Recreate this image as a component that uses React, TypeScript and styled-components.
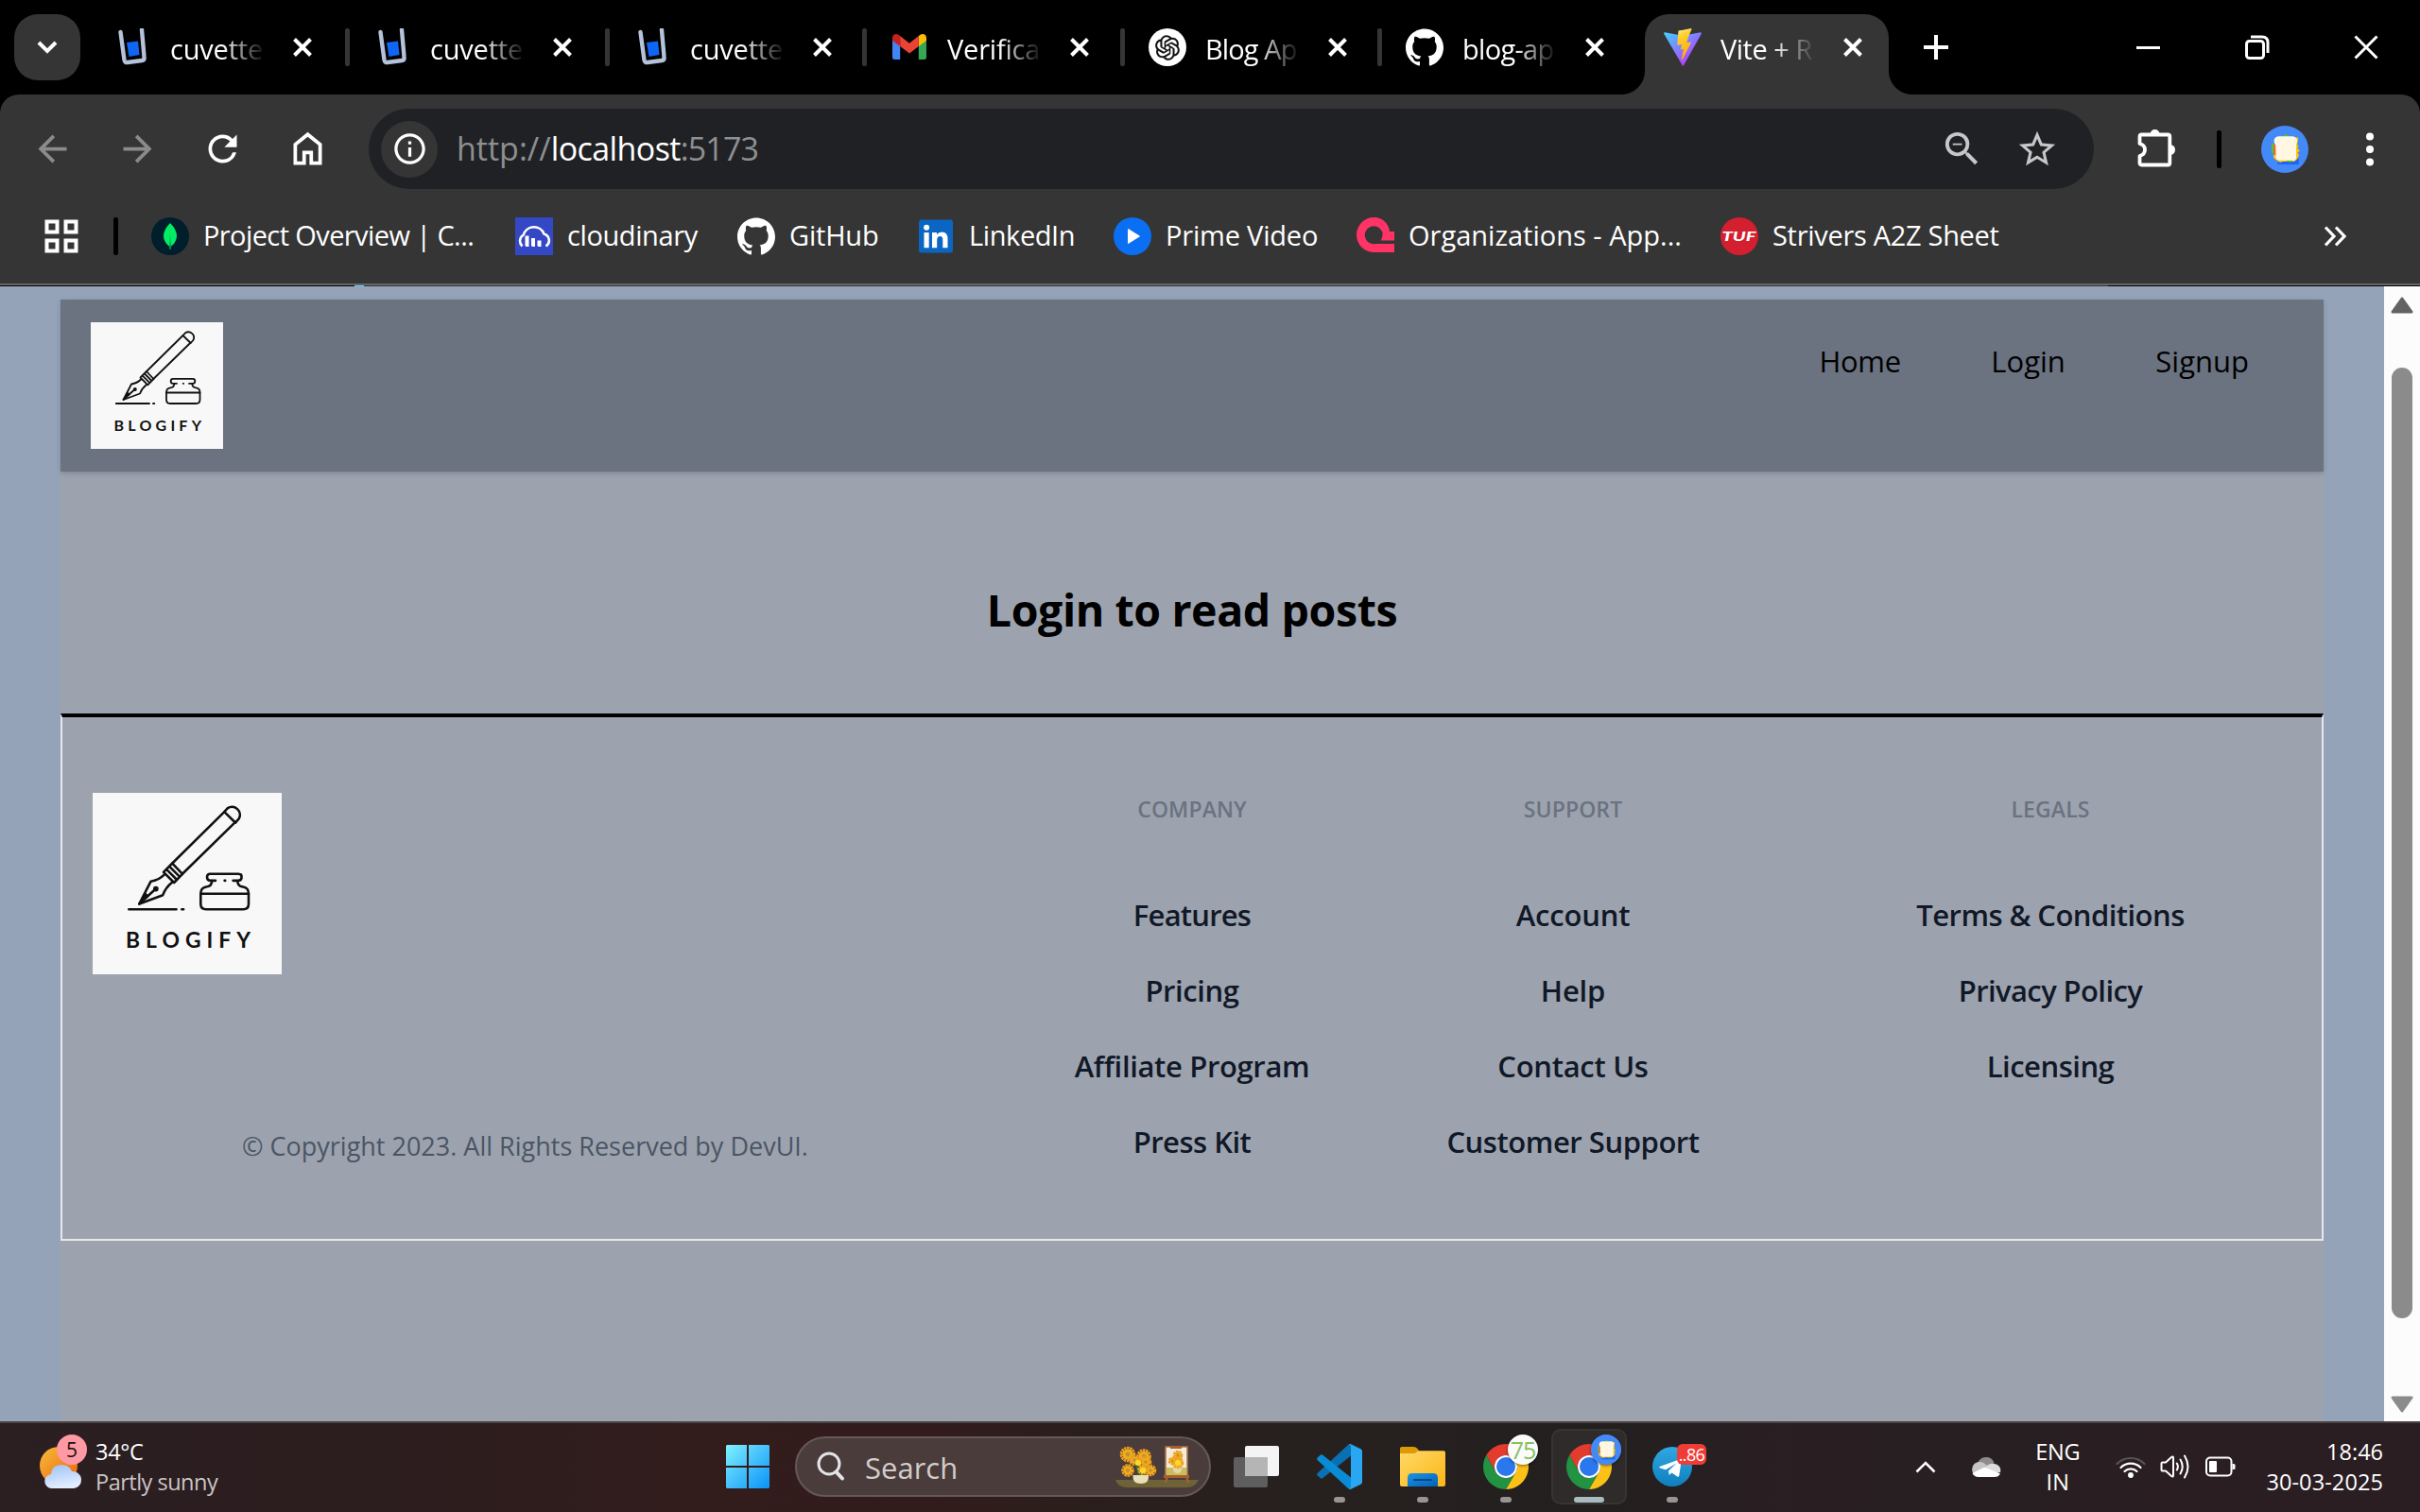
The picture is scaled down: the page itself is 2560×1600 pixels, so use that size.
import React from 'react';
import styled, { createGlobalStyle, css } from 'styled-components';
import { MdArrowBack, MdArrowForward, MdInfoOutline, MdRefresh, MdStarOutline, MdZoomOut } from 'react-icons/md';
import { SiGithub } from 'react-icons/si';
import { AiOutlineOpenAI } from 'react-icons/ai';

const GlobalStyle = createGlobalStyle`
  *, *::before, *::after { box-sizing: border-box; }
  html, body { margin: 0; padding: 0; background: #000; }
  body { font-family: "Open Sans", "Noto Sans", sans-serif; overflow: hidden; }
  svg { display: block; flex: none; }
`;

const Screen = styled.div`
  width: 2560px;
  height: 1600px;
  display: flex;
  flex-direction: column;
  overflow: hidden;
`;

/* ---------- text ---------- */

const Text = styled.span<{ $size: number; $track?: number; $color?: string; $weight?: number; $shift?: number }>`
  display: block;
  flex: none;
  white-space: nowrap;
  font-size: ${(p) => p.$size}px;
  letter-spacing: ${(p) => p.$track ?? 0}px;
  color: ${(p) => p.$color ?? '#fff'};
  font-weight: ${(p) => p.$weight ?? 400};
  line-height: 32px;
  padding-top: ${(p) => Math.max(0, 2 * (p.$shift ?? 0))}px;
  padding-bottom: ${(p) => Math.max(0, -2 * (p.$shift ?? 0))}px;
`;

/* ---------- tab strip ---------- */

const TabStrip = styled.div`
  height: 100px;
  flex: none;
  display: flex;
  align-items: flex-start;
  padding: 15px 0 0 15px;
  background: #000;
`;

const TabSearch = styled.div`
  width: 70px;
  height: 70px;
  margin-right: 15px;
  border-radius: 25px;
  background: #353535;
  display: flex;
  align-items: center;
  justify-content: center;
`;

const Tab = styled.div<{ $step: number; $active?: boolean }>`
  position: relative;
  width: ${(p) => p.$step}px;
  height: 85px;
  padding: 0 0 15px 20px;
  display: flex;
  align-items: center;
  flex: none;
  ${(p) =>
    p.$active &&
    css`
      background: #353535;
      border-radius: 25px 25px 0 0;
      &::before,
      &::after {
        content: '';
        position: absolute;
        bottom: 0;
        width: 25px;
        height: 25px;
      }
      &::before {
        left: -25px;
        background: radial-gradient(circle at 0 0, transparent 24.5px, #353535 25.5px);
      }
      &::after {
        right: -25px;
        background: radial-gradient(circle at 100% 0, transparent 24.5px, #353535 25.5px);
      }
    `}
`;

const TabTitle = styled.div`
  width: 98px;
  height: 44px;
  margin: 3px 32px 0 20px;
  display: flex;
  align-items: center;
  overflow: hidden;
  mask-image: linear-gradient(90deg, #000 56%, rgba(0, 0, 0, 0.1) 98%);
`;

const TabDivider = styled.div<{ $hidden?: boolean }>`
  width: 5px;
  height: 40px;
  margin-left: auto;
  margin-right: 5px;
  border-radius: 2px;
  background: #353535;
  display: ${(p) => (p.$hidden ? 'none' : 'block')};
`;

const NewTab = styled.div`
  width: 100px;
  height: 70px;
  display: flex;
  align-items: center;
  justify-content: center;
`;

const WindowControls = styled.div`
  margin-left: auto;
  height: 70px;
  display: flex;
  align-items: center;
`;

const WindowButton = styled.div`
  width: 115px;
  display: flex;
  justify-content: center;
`;

/* ---------- toolbar and bookmarks ---------- */

const ChromePanel = styled.div`
  height: 200px;
  flex: none;
  display: flex;
  flex-direction: column;
  background: #353535;
  border-radius: 20px 20px 0 0;
`;

const ToolRow = styled.div`
  height: 100px;
  display: flex;
  align-items: center;
  padding: 15px 0 0 10px;
`;

const ToolButton = styled.div<{ $w: number; $color?: string }>`
  width: ${(p) => p.$w}px;
  flex: none;
  display: flex;
  justify-content: center;
  color: ${(p) => p.$color ?? '#fff'};
`;

const Omnibox = styled.div`
  width: 1825px;
  height: 85px;
  flex: none;
  margin-left: 20px;
  padding: 0 20px 0 13px;
  display: flex;
  align-items: center;
  border-radius: 43px;
  background: #202124;
`;

const InfoBadge = styled.div`
  width: 60px;
  height: 60px;
  margin-right: 20px;
  border-radius: 50%;
  background: #353535;
  color: #fff;
  display: flex;
  align-items: center;
  justify-content: center;
`;

const Address = styled.div`
  display: flex;
  flex: 1;
`;

const Rule = styled.div<{ $left: number; $right: number }>`
  width: 5px;
  height: 40px;
  flex: none;
  margin: 0 ${(p) => p.$right}px 0 ${(p) => p.$left}px;
  border-radius: 2px;
  background: #000;
`;

const BookmarkRow = styled.div`
  height: 100px;
  display: flex;
  align-items: center;
  padding-left: 47px;
`;

const Bookmark = styled.div<{ $w: number }>`
  width: ${(p) => p.$w}px;
  flex: none;
  display: flex;
  align-items: center;
  gap: 15px;
`;

const ChromeEdge = styled.div`
  height: 3px;
  flex: none;
  border-top: 2px solid #67646a;
  background: linear-gradient(90deg, #000 375px, #61dafb 375px, #61dafb 385px, #35363a 385px, #35363a 2230px, #000 2230px);
`;

/* ---------- page ---------- */

const Viewport = styled.div`
  height: 1201px;
  flex: none;
  display: flex;
  background: #94a3b8;
`;

const Page = styled.div`
  width: 2394px;
  margin: 14px 64px 0;
  display: flex;
  flex-direction: column;
  background: #9ca3af;
`;

const Header = styled.header`
  height: 182px;
  flex: none;
  padding: 24px 79px 24px 32px;
  display: flex;
  justify-content: space-between;
  background: #6b7280;
  box-shadow: 0 2px 6px rgba(0, 0, 0, 0.13), 0 2px 4px -2px rgba(0, 0, 0, 0.13);
`;

const Nav = styled.nav`
  display: flex;
  align-items: flex-start;
  gap: 95.5px;
  padding-top: 25px;
`;

const Hero = styled.section`
  height: 256px;
  flex: none;
  display: flex;
  align-items: center;
  justify-content: center;
  padding-top: 35px;
`;

const Title = styled.h1`
  margin: 0;
  font-size: 46.5px;
  line-height: 64px;
  letter-spacing: -0.4px;
  font-weight: 700;
  color: #000;
`;

const Footer = styled.footer`
  height: 558px;
  flex: none;
  display: flex;
  border: 2px solid #e5e7eb;
  border-top: 4px solid #000;
`;

const Brand = styled.div`
  width: 978px;
  flex: none;
  padding: 80px 0 82px 32px;
  display: flex;
  flex-direction: column;
  justify-content: space-between;
`;

const Copyright = styled.div`
  display: flex;
  justify-content: center;
  padding-right: 31px;
`;

const LinkColumn = styled.div<{ $w: number; $inset?: number }>`
  width: ${(p) => p.$w}px;
  flex: none;
  padding: 81px 0 0 ${(p) => p.$inset ?? 0}px;
  display: flex;
  flex-direction: column;
  align-items: center;
`;

const LinkList = styled.div`
  margin-top: 80px;
  display: flex;
  flex-direction: column;
  align-items: center;
  gap: 48px;
`;

const Scrollbar = styled.div`
  width: 38px;
  display: flex;
  flex-direction: column;
  align-items: center;
  padding: 11px 0 9px;
  background: #fcfcfc;
`;

const Thumb = styled.div`
  width: 22px;
  height: 1006px;
  margin: 57px 0 auto;
  border-radius: 11px;
  background: #8b8b8b;
`;

/* ---------- taskbar ---------- */

const Taskbar = styled.div`
  height: 96px;
  flex: none;
  display: flex;
  align-items: center;
  border-top: 2px solid #4a4243;
  padding: 0 39px 2px 41px;
  background: linear-gradient(90deg, #2b1f22 0, #2c1d1e 400px, #331d1c 780px, #321c1b 980px, #2b1e1b 1120px, #26211f 1400px, #231f1f 1700px, #2a1f23 1880px, #271f21 2080px, #2a1e23 2300px, #2b1e23 100%);
`;

const Weather = styled.div`
  width: 727px;
  display: flex;
  align-items: center;
  gap: 7px;
`;

const Stack = styled.div<{ $align: string }>`
  display: flex;
  flex-direction: column;
  flex: none;
  align-items: ${(p) => p.$align};
`;

const SearchPill = styled.div`
  width: 440px;
  height: 64px;
  margin: 0 24px 0 27px;
  padding: 0 9px 0 21px;
  display: flex;
  align-items: center;
  flex: none;
  border: 2px solid #655856;
  border-radius: 32px;
  background: #4a3c3a;
`;

const SearchText = styled.div`
  margin-left: 21px;
  flex: 1;
`;

const Apps = styled.div`
  display: flex;
  flex: none;
  gap: 8px;
  margin-left: 24px;
`;

const AppSlot = styled.div<{ $active?: boolean }>`
  position: relative;
  width: 80px;
  height: 80px;
  flex: none;
  display: flex;
  align-items: center;
  justify-content: center;
  border-radius: 10px;
  border: 2px solid ${(p) => (p.$active ? '#383433' : 'transparent')};
  background: ${(p) => (p.$active ? '#2f2b2a' : 'transparent')};
`;

const Running = styled.div<{ $active?: boolean }>`
  position: absolute;
  bottom: 0;
  left: 50%;
  width: ${(p) => (p.$active ? 32 : 12)}px;
  height: 6px;
  border-radius: 3px;
  background: ${(p) => (p.$active ? '#a9bbc0' : '#989494')};
  transform: translateX(-50%);
`;

const Badge = styled.div<{ $bg: string }>`
  position: absolute;
  right: 4px;
  top: 4px;
  width: 32px;
  height: 32px;
  border-radius: 50%;
  display: flex;
  align-items: center;
  justify-content: center;
  overflow: hidden;
  background: ${(p) => p.$bg};
  box-shadow: 0 1px 3px rgba(0, 0, 0, 0.5);
`;

const CountBadge = styled.div`
  position: absolute;
  right: 2px;
  top: 14px;
  width: 31px;
  height: 22px;
  border-radius: 6px;
  display: flex;
  align-items: center;
  justify-content: center;
  background: #f03c37;
`;

const Tray = styled.div`
  margin-left: auto;
  display: flex;
  align-items: center;
`;

const TrayItem = styled.div<{ $after: number }>`
  margin-right: ${(p) => p.$after}px;
`;

/* ---------- drawings ---------- */

const BlogifyLogo = ({ w, h }: { w: number; h: number }) => (
  <svg width={w} height={h} viewBox="0 0 140 134" preserveAspectRatio="none">
    <rect width="140" height="134" fill="#f8f8f8" />
    <g fill="none" stroke="#111" strokeWidth="1.8" strokeLinecap="round" strokeLinejoin="round">
      <path d="M97.5 14 L59 52 M105.7 21.5 L66.3 60" />
      <path d="M97.5 14 L100 11.300 A5.900 5.900 0 0 1 108.400 19 L105.7 22 Z" />
      <path d="M59 52 L52.5 58.5 L60.3 66.3 L66.5 60 Z M57 54.5 L64.5 62 M54.8 56.6 L62.4 64.2" />
      <path d="M53 60.5 Q49 64.5 43 65.5 L34.5 82 L52 75.5 Q54 70 59 66" />
      <path d="M34.5 82 L46 71.5" />
      <path d="M26.8 86 H62 M66 86 H67.3" />
      <path d="M91 64.8 H87 Q84.7 64.8 84.7 62.2 Q84.7 59.8 87 59.8 H108 Q110.3 59.8 110.3 62.2 Q110.3 64.8 108 64.8 H104 M97.7 64.8 H98.200" />
      <path d="M88.3 65 Q88.3 69 84 69.4 Q80 70 80 74.5 V82 Q80 86 84 86 H111.5 Q115.5 86 115.5 82 V74.5 Q115.5 70 111.5 69.4 Q107.3 69 107.3 65" />
      <path d="M80 74.5 H115.5" />
    </g>
    <circle cx="46.8" cy="70.9" r="2" fill="#111" />
    <path d="M34.5 82 L39 73.5 L42 76.5 Z" fill="#111" />
    <text x="24.5" y="114.7" textLength="92.5" fontFamily="Lato, sans-serif" fontSize="16" fontWeight="700" fill="#111">
      BLOGIFY
    </text>
  </svg>
);

const Cuvette = () => (
  <svg width="40" height="40" viewBox="0 0 40 40">
    <path d="M7.5 4 L11.5 33.5 Q12 36.5 15 36 L30 34 Q33 33.5 32.5 30 L30 1.5" fill="none" stroke="#b4c3da" strokeWidth="4.4" strokeLinecap="round" strokeLinejoin="round" />
    <path d="M14 15 L26 13.5 L27.5 28 L16.5 30 Z" fill="#0f66f5" />
  </svg>
);

const Gmail = () => (
  <svg width="40" height="40" viewBox="0 0 40 40">
    <path d="M2 9 V30.5 Q2 33 4.500 33 H10.200 V17 Z" fill="#4285f4" />
    <path d="M38 9 V30.500 Q38 33 35.500 33 H29.800 V17 Z" fill="#34a853" />
    <path d="M2 11 Q2 6 6 6 Q8 6 10.200 8 V19 L2 13 Z" fill="#c5221f" />
    <path d="M38 11 Q38 6 34 6 Q32 6 29.800 8 V19 L38 13 Z" fill="#fbbc04" />
    <path d="M10.200 8 L20 15.700 L29.800 8 V19 L20 26.500 L10.200 19 Z" fill="#ea4335" />
  </svg>
);

const OpenAiDisc = styled.div`
  width: 40px;
  height: 40px;
  border-radius: 50%;
  background: #fff;
  color: #111;
  display: flex;
  align-items: center;
  justify-content: center;
  flex: none;
`;

const Vite = () => (
  <svg width="40" height="40" viewBox="0 0 40 40">
    <defs>
      <linearGradient id="vite-a" x1="0" y1="0" x2="0.8" y2="0.9">
        <stop offset="0" stopColor="#41d1ff" />
        <stop offset="1" stopColor="#bd34fe" />
      </linearGradient>
      <linearGradient id="vite-b" x1="0.4" y1="0" x2="0.6" y2="1">
        <stop offset="0" stopColor="#ffea83" />
        <stop offset="0.2" stopColor="#ffd02f" />
        <stop offset="1" stopColor="#ffa800" />
      </linearGradient>
    </defs>
    <path d="M39.800 5.800 L21.200 39 Q20.400 40.400 19.600 39 L0.200 5.800 Q-0.300 4.200 1.300 4.300 L20 7.700 L38.700 4.300 Q40.300 4.200 39.800 5.800 Z" fill="url(#vite-a)" />
    <path d="M28.800 0.100 L15.500 2.600 L14.300 17 Q14.300 17.800 15.200 17.700 L19 16.900 L17.900 22.400 L21 21.800 L18.700 32.500 Q19.500 33.700 20.300 32.300 L29.200 14.500 L24.300 15.200 L25.800 9.700 L29.500 1 Q29.700 0 28.800 0.100 Z" fill="url(#vite-b)" />
  </svg>
);

const CloseX = ({ size = 20, stroke = 4 }: { size?: number; stroke?: number }) => (
  <svg width={size} height={size} viewBox={`0 0 ${size} ${size}`}>
    <path d={`M1.5 1.500 L${size - 1.5} ${size - 1.5} M${size - 1.5} 1.500 L1.500 ${size - 1.5}`} stroke="#fff" strokeWidth={stroke} />
  </svg>
);

const HomeIcon = () => (
  <svg width="45" height="45" viewBox="0 0 24 24" fill="currentColor">
    <path d="M6 19h3v-6h6v6h3v-9l-6-4.800L6 10v9Zm-2 2V9l8-6.500L20 9v12h-7v-6h-2v6H4Z" />
  </svg>
);

const Puzzle = () => (
  <svg width="44" height="44" viewBox="0 0 44 44">
    <path
      d="M3.500 8.500 Q3.500 6.500 5.500 6.500 H33.300 Q35.300 6.500 35.300 8.500 V36.500 Q35.300 38.500 33.300 38.500 H5.500 Q3.500 38.500 3.500 36.500 V29 Q9 27.500 9 22.500 Q9 17.500 3.500 16 Z"
      fill="none"
      stroke="#fff"
      strokeWidth="3.800"
      strokeLinejoin="round"
    />
    <path d="M14.500 6 A5.100 5.100 0 0 1 24.700 6 Z M35.500 17 A5.500 5.500 0 0 1 35.500 28 Z" fill="#fff" />
  </svg>
);

const SandwichAvatar = ({ size }: { size: number }) => (
  <svg width={size} height={size} viewBox="0 0 50 50">
    <circle cx="25" cy="25" r="25" fill="#4489f8" />
    <path d="M17.500 34 H39.800 V41 H17.500 Z" fill="#1f62ff" />
    <path d="M34 12.500 H39 V16 L38 19.500 L39.500 21.500 L38.500 24 L41 26.500 L38.500 28.500 L40 31 L38.500 35 L35 38 H23 L20 39 L17 37 L13 34 V31 Z" fill="#ffc400" />
    <path d="M22 12 L26 9 L30 12 Z M10.800 20 L13 18 V30.500 L11 28 Z M26 37 L30 39 L34 37 Z" fill="#55c61e" />
    <path d="M12.800 20 H16 V31 H13.500 Z" fill="#f4623a" />
    <path d="M18 11.300 H33.500 Q39 12.500 37.800 18 L37 21 V34 Q37 37 33.500 36.800 L19 36.800 Q15.500 36.800 15.500 33 L15.300 21 L13.700 17.500 Q13 12 18 11.300 Z" fill="#fff7e2" />
  </svg>
);

const AppsGrid = () => (
  <svg width="36" height="36" viewBox="0 0 36 36" fill="none" stroke="#fff" strokeWidth="4">
    <rect x="2.500" y="2.500" width="11" height="11" />
    <rect x="22.500" y="2.500" width="11" height="11" />
    <rect x="2.500" y="22.500" width="11" height="11" />
    <rect x="22.500" y="22.500" width="11" height="11" />
  </svg>
);

const Mongo = () => (
  <svg width="40" height="40" viewBox="0 0 40 40">
    <circle cx="20" cy="20" r="20" fill="#001e2b" />
    <path d="M20 6 Q27 13 27 20 Q26.500 27 20.600 31 L20.400 34 H19.600 L19.400 31 Q13.500 27 13 20 Q13 13 20 6 Z" fill="#00ed64" />
    <path d="M20 18 L20.700 31 H19.500 Z" fill="#00684a" />
  </svg>
);

const Cloudinary = () => (
  <svg width="40" height="40" viewBox="0 0 40 40">
    <rect width="40" height="40" fill="#3448c5" />
    <path d="M7.500 30.500 A7.500 7.500 0 0 1 8.800 18.500 A11.500 11.500 0 0 1 30.500 17.500 A7.200 7.200 0 0 1 32.500 30.500" fill="none" stroke="#fff" strokeWidth="2.600" />
    <path d="M10.500 19.500 h4 v11.500 h-3 l-1 -1 Z M17 22 h4 v9 h-3 l-1 -1 Z M23.500 24.500 h4 v6.500 h-3 l-1 -1 Z" fill="#fff" />
  </svg>
);

const LinkedIn = () => (
  <svg width="40" height="40" viewBox="0 0 40 40">
    <rect x="2" y="2.500" width="36" height="35" rx="3" fill="#0a66c2" />
    <path d="M7.500 16 h5.200 v16.300 h-5.200 Z M16 16 h5 v2.300 Q22.800 15.600 26.300 15.600 Q32.500 15.600 32.500 22.800 V32.300 H27.300 V23.800 Q27.300 20.100 24.600 20.100 Q21.200 20.100 21.200 24.200 V32.300 H16 Z" fill="#fff" />
    <circle cx="10.100" cy="10.800" r="3" fill="#fff" />
  </svg>
);

const PrimeVideo = () => (
  <svg width="40" height="40" viewBox="0 0 40 40">
    <circle cx="20" cy="20" r="20" fill="#0a6ff2" />
    <path d="M15.500 12.500 L27.500 20 L15.500 27.500 Z" fill="#fff" stroke="#fff" strokeLinejoin="round" />
  </svg>
);

const Organizations = () => (
  <svg width="40" height="40" viewBox="0 0 40 40">
    <path d="M35 15 A16.500 17 0 0 0 18 0 A18 18.500 0 0 0 18 37 H40 V28 H20 A9.500 9.500 0 1 1 27 15 Z" fill="#ff3366" />
    <path d="M27.500 15 H40 V24.500 H25.500 Q28 21 27.500 15 Z" fill="#ff3366" />
  </svg>
);

const Tuf = () => (
  <svg width="40" height="40" viewBox="0 0 40 40">
    <circle cx="20" cy="20" r="20" fill="#d41f30" />
    <text x="1.500" y="25" textLength="36" lengthAdjust="spacingAndGlyphs" fontFamily="Lato, sans-serif" fontSize="14" fontWeight="900" fontStyle="italic" fill="#fff">
      TUF
    </text>
  </svg>
);

const SunCloud = () => (
  <svg width="53" height="68" viewBox="0 0 53 68">
    <defs>
      <linearGradient id="sun" x1="0" y1="0" x2="1" y2="1">
        <stop offset="0" stopColor="#f4bd3a" />
        <stop offset="1" stopColor="#f0600e" />
      </linearGradient>
      <linearGradient id="cloud" x1="0" y1="0" x2="0.300" y2="1">
        <stop offset="0" stopColor="#9cc0f8" />
        <stop offset="1" stopColor="#e2edff" />
      </linearGradient>
    </defs>
    <circle cx="21" cy="33" r="20" fill="url(#sun)" />
    <path d="M13 57 A8 7.600 0 0 1 13 42 Q14 32 24 32 Q32 32 35 39 A9 9 0 0 1 37 57 Z" fill="url(#cloud)" />
    <circle cx="35" cy="16" r="16" fill="#ff99a4" />
    <text x="35" y="23.500" textAnchor="middle" fontFamily="Open Sans, sans-serif" fontSize="21" fill="#1a1010">
      5
    </text>
  </svg>
);

const StartIcon = () => (
  <svg width="46" height="46" viewBox="0 0 46 46">
    <defs>
      <linearGradient id="start" gradientUnits="userSpaceOnUse" x1="0" y1="0" x2="46" y2="46">
        <stop offset="0" stopColor="#7df3ff" />
        <stop offset="0.500" stopColor="#45c0fb" />
        <stop offset="1" stopColor="#0a93f8" />
      </linearGradient>
    </defs>
    <path d="M1 0 H22 V22 H0 V1 Z M24 0 H45 L46 1 V22 H24 Z M0 24 H22 V46 H1 L0 45 Z M24 24 H46 V45 L45 46 H24 Z" fill="url(#start)" />
  </svg>
);

const SearchIcon = () => (
  <svg width="30" height="32" viewBox="0 0 30 32" fill="none" stroke="#e4e4e8" strokeLinecap="round">
    <circle cx="13" cy="13" r="11" strokeWidth="3" />
    <path d="M20.500 21.500 L27 28.500" strokeWidth="4" />
  </svg>
);

const blossoms: [number, number, number][] = [
  [13, 11, 8], [30, 13, 7.5], [13, 28, 6.5], [20, 17, 5.500], [32, 19, 6], [37, 28, 6], [29, 27, 5.5],
  [66, 12, 5], [66, 20, 6], [60, 18, 4],
];

const Sunflowers = () => (
  <svg width="90" height="48" viewBox="0 0 90 48">
    <path d="M0 38 H88 Q84 46 76 46 H12 Q3 46 0 38 Z" fill="#6e6236" />
    <path d="M21 16 L26 35 M35 20 L28 35" stroke="#2e6b3c" strokeWidth="3" />
    <path d="M54 38 L56 30 H74 L77 41 M56 30 L53 41" stroke="#a5602d" strokeWidth="2.500" fill="none" />
    <rect x="53" y="3" width="23" height="31" fill="#f3ead8" stroke="#a8764a" strokeWidth="1.500" />
    <rect x="54" y="25" width="21" height="8" fill="#c9bd5e" />
    <rect x="51" y="33" width="27" height="3" fill="#a5602d" />
    <rect x="58" y="2" width="12" height="3" fill="#a5602d" />
    <path d="M61 24 H70 Q71 31 65.500 31 Q60 31 61 24 Z" fill="#e3d9a8" />
    {blossoms.map(([x, y, r]) => (
      <g key={`${x}-${y}`}>
        <circle cx={x} cy={y} r={r - 1.2} fill="none" stroke="#eda11d" strokeWidth="3" strokeDasharray="2.400 0.700" />
        <circle cx={x} cy={y} r={r * 0.7} fill="#f2a922" />
        <circle cx={x} cy={y} r={r * 0.3} fill="#b8962a" />
      </g>
    ))}
    <circle cx="24" cy="20" r="3" fill="#ffd92a" />
    <circle cx="29" cy="28" r="3" fill="#ffd92a" />
    <circle cx="66" cy="20" r="3" fill="#ffd92a" />
    <path d="M18.500 33 H35 Q36 42 27 42 Q17.500 42 18.500 33 Z" fill="#e9dfb4" />
  </svg>
);

const TaskView = () => (
  <svg width="48" height="44" viewBox="0 0 48 44">
    <rect x="0" y="12" width="36" height="32" rx="2" fill="#5e5e5e" />
    <rect x="12" y="0" width="36" height="32" rx="2" fill="#f4f4f4" />
    <rect x="12" y="12" width="24" height="20" fill="#b5b5b5" />
  </svg>
);

const VsCode = () => (
  <svg width="48" height="48" viewBox="0 0 48 48">
    <path d="M33 1 L36 0 V12.500 L6 36.300 Q5 37 4 36.300 L0.600 33.300 Q-0.300 32 0.600 31 Z" fill="#0a70b4" />
    <path d="M0.600 17 Q-0.300 15.800 0.600 14.500 L4 11.600 Q5 10.800 6 11.600 L36 35.500 V48 L33 47 Z" fill="#0a8bd6" />
    <path d="M35.500 0 L46.500 5.300 Q48 6 48 7.500 V40.500 Q48 42 46.500 42.700 L35.500 48 Q34.500 48 33 47 Q36 48 36 45 V3 Q36 0 33 1 Q34.500 0 35.500 0 Z" fill="#2aa7f2" />
  </svg>
);

const Folder = () => (
  <svg width="48" height="42" viewBox="0 0 48 42">
    <defs>
      <linearGradient id="folder" x1="0" y1="0" x2="1" y2="1">
        <stop offset="0" stopColor="#ffd968" />
        <stop offset="1" stopColor="#fbb616" />
      </linearGradient>
      <linearGradient id="dock" x1="0" y1="0" x2="1" y2="1">
        <stop offset="0" stopColor="#1a95e0" />
        <stop offset="1" stopColor="#0560b8" />
      </linearGradient>
    </defs>
    <path d="M0 2 Q0 0 2 0 H14 Q17 0 18.500 2 L21 5.500 V12 H0 Z" fill="#dd9a04" />
    <path d="M0 7 H14 Q16 7 17.500 5.500 Q18.800 4.200 21 4.200 H46 Q48 4.200 48 6.200 V40 Q48 42 46 42 H2 Q0 42 0 40 Z" fill="url(#folder)" />
    <path d="M8 42 V33 Q8 28 13 28 H35 Q40 28 40 33 V42 Z" fill="url(#dock)" />
    <path d="M15 35 H33" stroke="#0a4688" strokeWidth="2" strokeLinecap="round" />
  </svg>
);

const ChromeLogo = () => (
  <svg width="48" height="48" viewBox="0 0 48 48">
    <path d="M24 12H44.780A24 24 0 0 0 3.220 12L13.610 30A12 12 0 0 1 24 12Z" fill="#e33b2e" />
    <path d="M34.390 30 24 48A24 24 0 0 0 44.780 12H24A12 12 0 0 1 34.390 30Z" fill="#fbc116" />
    <path d="M13.610 30 3.220 12A24 24 0 0 0 24 48L34.390 30A12 12 0 0 1 13.610 30Z" fill="#229342" />
    <circle cx="24" cy="24" r="12" fill="#fff" />
    <circle cx="24" cy="24" r="10" fill="#2a77ee" />
  </svg>
);

const Telegram = () => (
  <svg width="42" height="42" viewBox="0 0 42 42">
    <defs>
      <linearGradient id="telegram" x1="0" y1="0" x2="0" y2="1">
        <stop offset="0" stopColor="#2fa8e2" />
        <stop offset="1" stopColor="#0f7fbe" />
      </linearGradient>
    </defs>
    <circle cx="21" cy="21" r="21" fill="url(#telegram)" />
    <path d="M7.500 21 L31 12.500 L28.300 30.500 Q28 32.300 26.300 31.500 L20.500 27.500 L17.800 30 L17 25.500 L25.500 17.500 L14 24.300 L8 22.400 Q6.500 21.600 7.500 21 Z" fill="#fff" />
  </svg>
);

const Cloud = () => (
  <svg width="32" height="22" viewBox="0 0 32 22">
    <path d="M7 8 A9.200 9.200 0 0 1 24.500 7 L16 14 Z" fill="#8f8b8d" />
    <path d="M8 6 Q13 5.500 17 10 L4 20 A8 8 0 0 1 8 6 Z" fill="#c6c4c5" />
    <path d="M15 12 Q19 7 25 8 A7 7 0 0 1 31 17 L26 18 Z" fill="#dcdcdc" />
    <path d="M1.500 18 L14.500 11.500 L31 18.500 Q29 22 25 22 H8 Q3.500 22 1.500 18 Z" fill="#fff" />
  </svg>
);

const Wifi = () => (
  <svg width="32" height="27" viewBox="0 0 32 27" fill="none" stroke="#fff" strokeWidth="2.200" strokeLinecap="round">
    <path d="M1.500 10 A20.500 20.500 0 0 1 30.500 10" stroke="#5b5255" />
    <path d="M5.500 14 A15 15 0 0 1 26.500 14" />
    <path d="M9.500 18 A9.300 9.300 0 0 1 22.500 18" />
    <circle cx="16" cy="22" r="2.200" fill="#fff" stroke="#fff" strokeWidth="1.500" />
  </svg>
);

const Speaker = () => (
  <svg width="33" height="28" viewBox="0 0 33 28" fill="none" stroke="#fff" strokeWidth="2" strokeLinecap="round" strokeLinejoin="round">
    <path d="M1.500 10.500 Q1.500 9.500 2.500 9.500 H6 L12 4 Q14 2.500 14 5 V23 Q14 25.500 12 24 L6 18.500 H2.500 Q1.500 18.500 1.500 17.500 Z" />
    <path d="M17.800 10.500 Q20 14 17.800 17.500 M21.500 6.500 Q26 14 21.500 21.500 M26 2.500 Q33 14 26 25.500" />
  </svg>
);

const Battery = () => (
  <svg width="32" height="22" viewBox="0 0 32 22">
    <rect x="1" y="1.500" width="26.500" height="19" rx="4" fill="none" stroke="#fff" strokeWidth="2" />
    <rect x="4" y="5" width="8" height="12" rx="1" fill="#fff" />
    <path d="M28.500 8 H30 Q31.500 8 31.500 9.500 V12.500 Q31.500 14 30 14 H28.500 Z" fill="#fff" />
  </svg>
);

/* ---------- data ---------- */

const tabs = [
  { icon: <Cuvette />, title: 'cuvette', step: 275 },
  { icon: <Cuvette />, title: 'cuvette', step: 275 },
  { icon: <Cuvette />, title: 'cuvette', step: 272 },
  { icon: <Gmail />, title: 'Verifica', step: 273 },
  { icon: <OpenAiDisc><AiOutlineOpenAI size={34} /></OpenAiDisc>, title: 'Blog Ap', step: 272, track: -0.9 },
  { icon: <SiGithub size={40} color="#fff" />, title: 'blog-ap', step: 273, track: -0.7, last: true },
  { icon: <Vite />, title: 'Vite + R', step: 258, track: -0.5, active: true },
];

const bookmarks = [
  { icon: <Mongo />, label: 'Project Overview | C...', track: -0.6, w: 385 },
  { icon: <Cloudinary />, label: 'cloudinary', track: -0.4, w: 235 },
  { icon: <SiGithub size={40} color="#fff" />, label: 'GitHub', track: -0.2, w: 190 },
  { icon: <LinkedIn />, label: 'LinkedIn', track: -0.4, w: 208 },
  { icon: <PrimeVideo />, label: 'Prime Video', track: -0.2, w: 257 },
  { icon: <Organizations />, label: 'Organizations - App...', track: 0, w: 385 },
  { icon: <Tuf />, label: 'Strivers A2Z Sheet', track: -0.3, w: 638 },
];

const columns = [
  {
    title: 'COMPANY',
    w: 434,
    links: [['Features', -0.8], ['Pricing', -0.4], ['Affiliate Program', -0.35], ['Press Kit', -0.5]],
  },
  {
    title: 'SUPPORT',
    w: 372,
    links: [['Account', -0.2], ['Help', -0.2], ['Contact Us', -0.3], ['Customer Support', -0.45]],
  },
  {
    title: 'LEGALS',
    w: 606,
    inset: 32,
    links: [['Terms & Conditions', -0.55], ['Privacy Policy', -0.6], ['Licensing', -0.5]],
  },
] as { title: string; w: number; inset?: number; links: [string, number][] }[];

export default function App() {
  return (
    <Screen>
      <GlobalStyle />
      <TabStrip>
        <TabSearch>
          <svg width="22" height="14" viewBox="0 0 22 14">
            <path d="M2 2 L11 11 L20 2" fill="none" stroke="#fff" strokeWidth="4" />
          </svg>
        </TabSearch>
        {tabs.map((tab, i) => (
          <Tab key={i} $step={tab.step} $active={tab.active}>
            {tab.icon}
            <TabTitle>
              <Text $size={29} $track={tab.track ?? -0.2}>{tab.title}</Text>
            </TabTitle>
            <CloseX />
            <TabDivider $hidden={tab.active || tab.last} />
          </Tab>
        ))}
        <NewTab>
          <svg width="26" height="26" viewBox="0 0 26 26">
            <path d="M13 0 V26 M0 13 H26" stroke="#fff" strokeWidth="4" />
          </svg>
        </NewTab>
        <WindowControls>
          <WindowButton>
            <svg width="25" height="3"><rect width="25" height="3" fill="#fff" /></svg>
          </WindowButton>
          <WindowButton>
            <svg width="26" height="26" viewBox="0 0 26 26" fill="none" stroke="#fff" strokeWidth="3">
              <rect x="1.500" y="6.500" width="18" height="18" rx="3" />
              <path d="M6 2 H18 Q24 2 24 8 V19" />
            </svg>
          </WindowButton>
          <WindowButton>
            <CloseX size={26} stroke={3} />
          </WindowButton>
        </WindowControls>
      </TabStrip>

      <ChromePanel>
        <ToolRow>
          <ToolButton $w={90} $color="#8b8b8b"><MdArrowBack size={45} /></ToolButton>
          <ToolButton $w={90} $color="#8b8b8b"><MdArrowForward size={45} /></ToolButton>
          <ToolButton $w={90}><MdRefresh size={45} /></ToolButton>
          <ToolButton $w={90}><HomeIcon /></ToolButton>
          <Omnibox>
            <InfoBadge><MdInfoOutline size={39} /></InfoBadge>
            <Address>
              <Text $size={34} $track={0} $color="#8e8f91" $shift={-0.5}>http://</Text>
              <Text $size={34} $track={-0.6} $shift={-0.5}>localhost</Text>
              <Text $size={34} $track={-0.9} $color="#8e8f91" $shift={-0.5}>:5173</Text>
            </Address>
            <ToolButton $w={80} $color="#c7c7c7"><MdZoomOut size={47} /></ToolButton>
            <ToolButton $w={80} $color="#c7c7c7"><MdStarOutline size={46} /></ToolButton>
          </Omnibox>
          <ToolButton $w={134}><Puzzle /></ToolButton>
          <Rule $left={-4} $right={42} />
          <SandwichAvatar size={50} />
          <ToolButton $w={130}>
            <svg width="10" height="38" viewBox="0 0 10 38" fill="#fff">
              <circle cx="5" cy="5.500" r="4" />
              <circle cx="5" cy="19" r="4" />
              <circle cx="5" cy="32.500" r="4" />
            </svg>
          </ToolButton>
        </ToolRow>
        <BookmarkRow>
          <AppsGrid />
          <Rule $left={37} $right={35} />
          {bookmarks.map((b) => (
            <Bookmark key={b.label} $w={b.w}>
              {b.icon}
              <Text $size={29} $track={b.track} $shift={-1}>{b.label}</Text>
            </Bookmark>
          ))}
          <svg width="24" height="22" viewBox="0 0 24 22" fill="none" stroke="#fff" strokeWidth="3.200">
            <path d="M2 1.500 L11 11 L2 20.500 M13 1.500 L22 11 L13 20.500" />
          </svg>
        </BookmarkRow>
      </ChromePanel>
      <ChromeEdge />

      <Viewport>
        <Page>
          <Header>
            <BlogifyLogo w={140} h={134} />
            <Nav>
              <Text $size={31} $track={-0.3} $color="#000">Home</Text>
              <Text $size={31} $color="#000">Login</Text>
              <Text $size={31} $color="#000">Signup</Text>
            </Nav>
          </Header>
          <Hero>
            <Title>Login to read posts</Title>
          </Hero>
          <Footer>
            <Brand>
              <BlogifyLogo w={200} h={192} />
              <Copyright>
                <Text $size={27} $color="#4b5563">© Copyright 2023. All Rights Reserved by DevUI.</Text>
              </Copyright>
            </Brand>
            {columns.map((c) => (
              <LinkColumn key={c.title} $w={c.w} $inset={c.inset}>
                <Text $size={23} $track={0.1} $weight={600} $color="#6b7280">{c.title}</Text>
                <LinkList>
                  {c.links.map(([label, track]) => (
                    <Text key={label} $size={31} $track={track} $weight={600} $color="#111827">{label}</Text>
                  ))}
                </LinkList>
              </LinkColumn>
            ))}
          </Footer>
        </Page>
        <Scrollbar>
          <svg width="24" height="18" viewBox="0 0 24 18"><path d="M12 2 L22 16 H2 Z" fill="#636363" stroke="#636363" strokeWidth="3" strokeLinejoin="round" /></svg>
          <Thumb />
          <svg width="24" height="18" viewBox="0 0 24 18"><path d="M12 16 L22 2 H2 Z" fill="#8b8b8b" stroke="#8b8b8b" strokeWidth="3" strokeLinejoin="round" /></svg>
        </Scrollbar>
      </Viewport>

      <Taskbar>
        <Weather>
          <SunCloud />
          <Stack $align="flex-start">
            <Text $size={23.5} $track={-0.3}>34°C</Text>
            <Text $size={23.5} $track={-0.5} $color="#cbc6c6">Partly sunny</Text>
          </Stack>
        </Weather>
        <StartIcon />
        <SearchPill>
          <SearchIcon />
          <SearchText><Text $size={31} $shift={1} $color="#d2cdcc">Search</Text></SearchText>
          <Sunflowers />
        </SearchPill>
        <TaskView />
        <Apps>
          <AppSlot><VsCode /><Running /></AppSlot>
          <AppSlot><Folder /><Running /></AppSlot>
          <AppSlot>
            <ChromeLogo />
            <Badge $bg="#fbfbfb"><Text $size={25} $track={-1} $color="#84c25c">75</Text></Badge>
            <Running />
          </AppSlot>
          <AppSlot $active>
            <ChromeLogo />
            <Badge $bg="#4489f8"><SandwichAvatar size={32} /></Badge>
            <Running $active />
          </AppSlot>
          <AppSlot>
            <Telegram />
            <CountBadge><Text $size={18} $track={-0.6}>..86</Text></CountBadge>
            <Running />
          </AppSlot>
        </Apps>
        <Tray>
          <TrayItem $after={37}>
            <svg width="22" height="14" viewBox="0 0 22 14"><path d="M1.500 12.500 L11 3 L20.500 12.500" fill="none" stroke="#fff" strokeWidth="2.600" /></svg>
          </TrayItem>
          <TrayItem $after={36}><Cloud /></TrayItem>
          <TrayItem $after={38}>
            <Stack $align="center">
              <Text $size={23.5} $track={-0.2}>ENG</Text>
              <Text $size={23.5}>IN</Text>
            </Stack>
          </TrayItem>
          <TrayItem $after={15}><Wifi /></TrayItem>
          <TrayItem $after={15}><Speaker /></TrayItem>
          <TrayItem $after={32}><Battery /></TrayItem>
          <Stack $align="flex-end">
            <Text $size={23.5}>18:46</Text>
            <Text $size={23.5} $track={0.1}>30-03-2025</Text>
          </Stack>
        </Tray>
      </Taskbar>
    </Screen>
  );
}
